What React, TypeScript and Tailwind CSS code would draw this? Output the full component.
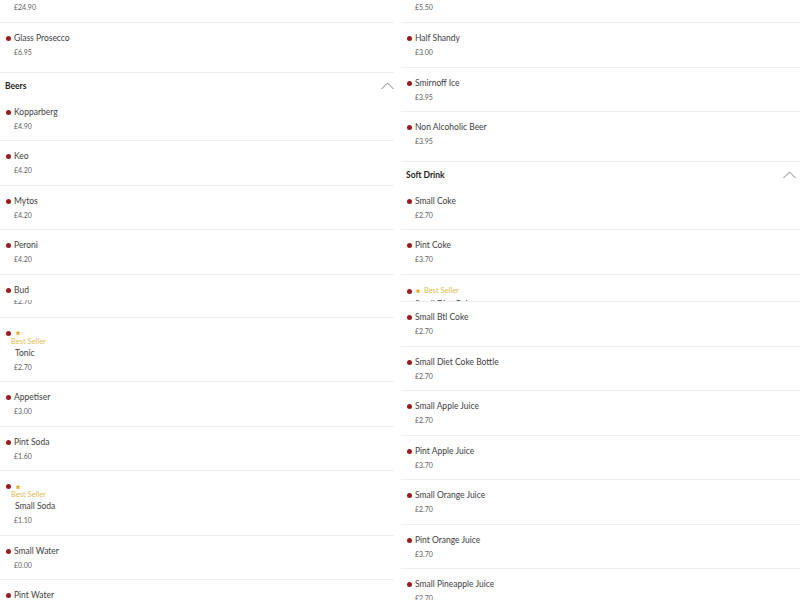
import React from "react";

type Item = {
  name: string;
  price: string;
  h: string;
  kind?: "normal" | "best" | "bestCut" | "priceCut" | "partial";
};

const LEFT: (Item | { header: string })[] = [
  { name: "", price: "£24.90", h: "h-[23px]", kind: "partial" },
  { name: "Glass Prosecco", price: "£6.95", h: "h-[49.5px]" },
  { header: "Beers" },
  { name: "Kopparberg", price: "£4.90", h: "h-[44.5px]" },
  { name: "Keo", price: "£4.20", h: "h-[44.5px]" },
  { name: "Mytos", price: "£4.20", h: "h-[44.5px]" },
  { name: "Peroni", price: "£4.20", h: "h-[44.5px]" },
  { name: "Bud", price: "£2.70", h: "h-[43px]", kind: "priceCut" },
  { name: "Tonic", price: "£2.70", h: "h-[64.5px]", kind: "best" },
  { name: "Appetiser", price: "£3.00", h: "h-[44.5px]" },
  { name: "Pint Soda", price: "£1.60", h: "h-[44.5px]" },
  { name: "Small Soda", price: "£1.10", h: "h-[64.5px]", kind: "best" },
  { name: "Small Water", price: "£0.00", h: "h-[44.5px]" },
  { name: "Pint Water", price: "£0.00", h: "h-[44.5px]" },
];

const RIGHT: (Item | { header: string })[] = [
  { name: "", price: "£5.50", h: "h-[23px]", kind: "partial" },
  { name: "Half Shandy", price: "£3.00", h: "h-[44.5px]" },
  { name: "Smirnoff Ice", price: "£3.95", h: "h-[44.5px]" },
  { name: "Non Alcoholic Beer", price: "£3.95", h: "h-[49.5px]" },
  { header: "Soft Drink" },
  { name: "Small Coke", price: "£2.70", h: "h-[44.5px]" },
  { name: "Pint Coke", price: "£3.70", h: "h-[44.5px]" },
  { name: "Small Diet Coke", price: "£2.70", h: "h-[27.5px]", kind: "bestCut" },
  { name: "Small Btl Coke", price: "£2.70", h: "h-[44.5px]" },
  { name: "Small Diet Coke Bottle", price: "£2.70", h: "h-[44.5px]" },
  { name: "Small Apple Juice", price: "£2.70", h: "h-[44.5px]" },
  { name: "Pint Apple Juice", price: "£3.70", h: "h-[44.5px]" },
  { name: "Small Orange Juice", price: "£2.70", h: "h-[44.5px]" },
  { name: "Pint Orange Juice", price: "£3.70", h: "h-[44.5px]" },
  { name: "Small Pineapple Juice", price: "£2.70", h: "h-[44.5px]" },
];

function Dot() {
  return <span className="w-[5px] h-[5px] rounded-full bg-[#9b1b1f] shrink-0" />;
}

function Star() {
  return (
    <svg width="6" height="6" viewBox="0 0 24 24" className="shrink-0">
      <path
        d="M12 1.5l3.2 6.9 7.3.8-5.5 5 1.6 7.3L12 17.8l-6.6 3.7L7 14.2l-5.5-5 7.3-.8z"
        fill="#e3b32c"
      />
    </svg>
  );
}

function Chevron() {
  return (
    <svg width="13" height="8" viewBox="0 0 13 8" fill="none">
      <polyline points="0.5,7 6.5,1 12.5,7" stroke="#808080" strokeWidth="1" />
    </svg>
  );
}

const NAME = "text-[8.5px] leading-[11px] text-[#404040]";
const PRICE = "text-[7px] leading-[11px] text-[#606060] pl-[14px]";
const BEST = "text-[7.5px] leading-[6px] text-[#e2bd4f]";

function Row({ item }: { item: Item }) {
  const kind = item.kind ?? "normal";

  if (kind === "partial") {
    return (
      <div className={`${item.h} border-b border-[#eeeeee] pt-[2px]`}>
        <div className={PRICE}>{item.price}</div>
      </div>
    );
  }

  if (kind === "best") {
    return (
      <div className={`${item.h} border-b border-[#eeeeee] pt-[10px] pl-[6px]`}>
        <div className="flex items-center gap-[4px] h-[11px]">
          <Dot />
          <Star />
        </div>
        <div className={`${BEST} pl-[5px]`}>Best Seller</div>
        <div className={`${NAME} mt-[3px] pl-[9px]`}>{item.name}</div>
        <div className="text-[7px] leading-[11px] text-[#606060] pl-[8px] mt-[3px]">{item.price}</div>
      </div>
    );
  }

  if (kind === "bestCut") {
    return (
      <div className={`${item.h} border-b border-[#eeeeee] pt-[11px] pl-[6px] overflow-hidden`}>
        <div className="flex items-center gap-[3px] h-[11px]">
          <Dot />
          <Star />
          <span className={BEST}>Best Seller</span>
        </div>
        <div className={`${NAME} mt-[2px] pl-[8px]`}>{item.name}</div>
      </div>
    );
  }

  return (
    <div className={`${item.h} border-b border-[#eeeeee] pt-[10px]`}>
      <div className="flex items-center gap-[3px] pl-[6px]">
        <Dot />
        <span className={NAME}>{item.name}</span>
      </div>
      {kind === "priceCut" ? (
        <div className="h-[5px] mt-[4px] overflow-hidden">
          <div className={`${PRICE} -mt-[4px]`}>{item.price}</div>
        </div>
      ) : (
        <div className={`${PRICE} mt-[3px]`}>{item.price}</div>
      )}
    </div>
  );
}

function Column({ rows, chevronPad }: { rows: (Item | { header: string })[]; chevronPad: string }) {
  return (
    <div className="flex flex-col min-w-0">
      {rows.map((r, i) =>
        "header" in r ? (
          <div key={i} className={`h-[24px] flex items-start justify-between pt-[8px] pl-[5px] ${chevronPad}`}>
            <span className="text-[8.5px] leading-[11px] font-bold text-[#1c1c1c]">{r.header}</span>
            <span className="pt-[1px]">
              <Chevron />
            </span>
          </div>
        ) : (
          <Row key={i} item={r} />
        )
      )}
    </div>
  );
}

export default function App() {
  return (
    <div className="w-[800px] h-[600px] overflow-hidden bg-white font-['Lato','Open_Sans',sans-serif]">
      <div className="grid grid-cols-[394px_1fr] gap-x-[7px]">
        <Column rows={LEFT} chevronPad="pr-[0px]" />
        <Column rows={RIGHT} chevronPad="pr-[4px]" />
      </div>
    </div>
  );
}
